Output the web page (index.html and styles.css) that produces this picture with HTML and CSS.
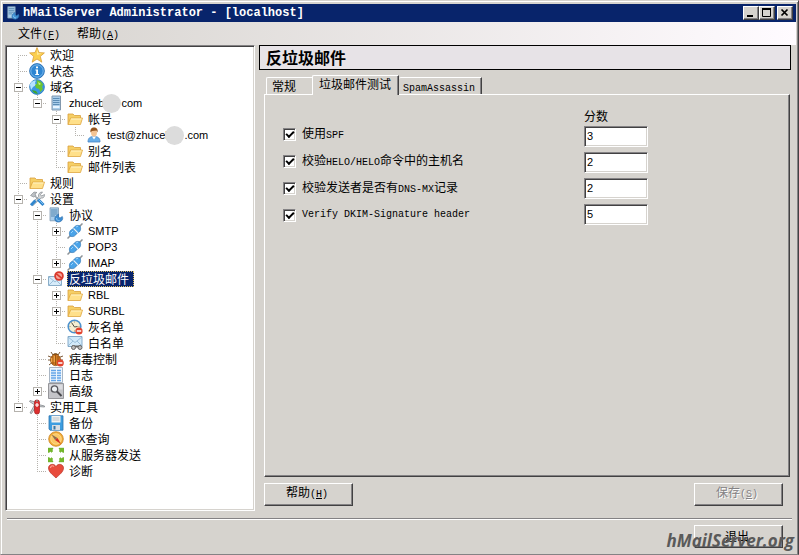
FILE: index.html
```html
<!DOCTYPE html>
<html lang="zh-CN">
<head>
    <meta charset="utf-8">
    <title>hMailServer Administrator</title>
    <link rel="stylesheet" href="styles.css">
</head>
<body>
<!-- icon set -->
<svg class="defs" aria-hidden="true">
    <symbol id="star" viewBox="0 0 16 16">
        <path d="M8 .6l2 5 5.4.3-4.1 3.5 1.5 5.8L8 12l-4.8 3.2 1.5-5.8L.6 5.9 6 5.6z" fill="#fbd050" stroke="#d9a03a" stroke-width=".8"/>
        <path d="M8 2.6l1.3 3.6 3.6.4L8 8z" fill="#ffe99b"/>
    </symbol>
    <symbol id="info" viewBox="0 0 16 16">
        <circle cx="8" cy="8" r="7.4" fill="#2f86d2" stroke="#2268ad" stroke-width=".8"/>
        <circle cx="8" cy="8" r="6.2" fill="none" stroke="#8cc4f2" stroke-width=".8"/>
        <path d="M7 3.4h2v1.8H7zM6.4 6.6H9V11h1v1H6.2v-1h1V7.6h-.8z" fill="#fff"/>
    </symbol>
    <symbol id="globe" viewBox="0 0 16 16">
        <circle cx="8" cy="8" r="7.4" fill="#3b97e3" stroke="#2c79bd" stroke-width=".8"/>
        <path d="M1 6c0-2 3-5 6-4.5L6 4l1 2-3 2-2 3z" fill="#b4e2ff"/>
        <path d="M7.5 1.2c3 0 5.500 1.500 6.600 4.300L13 8l1 2-2.500 3-1.500-3-3-1L6 6l2-1.500z" fill="#6cc432"/>
        <path d="M3 11l4 1 2 2.800c-3 .3-5-1.300-6-3.800z" fill="#3fa62f"/>
        <path d="M9 3l3 2-2 1z" fill="#d2f090"/>
    </symbol>
    <symbol id="server" viewBox="0 0 16 16">
        <path d="M4 1h8.500v14H4z" fill="#a8cdea" stroke="#8298ad"/>
        <path d="M5 3.500h6.500M5 5.500h6.500M5 7.500h6.500M5 9.500h6.500" stroke="#5c8db5"/>
        <path d="M5 12h6.500" stroke="#e8f5ff" stroke-width="2"/>
    </symbol>
    <symbol id="folder" viewBox="0 0 16 16">
        <path d="M1 13.500V3h5l1.500 1.500h6V8" fill="#f5cf66" stroke="#d9a03c" stroke-width=".8"/>
        <path d="M1 13.500L3.500 7h12L13.500 13.500z" fill="#ffe08a" stroke="#dea63f" stroke-width=".8"/>
        <path d="M4 8h10.500" stroke="#fff3c4"/>
    </symbol>
    <symbol id="user" viewBox="0 0 16 16">
        <path d="M2 15c0-4 2-5.500 6-5.500s6 1.500 6 5.500z" fill="#67aeea" stroke="#4684c4" stroke-width=".8"/>
        <path d="M6 9.500h4L8 12.500z" fill="#fff"/>
        <ellipse cx="8" cy="5.500" rx="3" ry="4" fill="#f4c494"/>
        <path d="M4.500 5.500C4 2 5.500.5 8 .5s4.300 1.500 3.500 5L10.500 3.500 6 4z" fill="#94541c"/>
    </symbol>
    <symbol id="tools" viewBox="0 0 16 16">
        <path d="M13.500 1l-2 2.500 1 1.500 3-1.500c.3 3-2 4-3.500 3.500L4 14.500 2 13l7.500-7.500C9 3 11 .8 13.500 1z" fill="#d3d6d8" stroke="#858b90" stroke-width=".7"/>
        <path d="M1.500 4.500L5 1l3 .5-2 1.300L7 5 4.500 6z" fill="#bcc0c4" stroke="#7d8388" stroke-width=".6"/>
        <path d="M6 5l4 4" stroke="#a4a9ad" stroke-width="1.600"/>
        <path d="M9 8.500l5.500 5.500M6.500 9.500L2 14.200" stroke="#3186cd" stroke-width="3"/>
        <path d="M9.500 8.500l4.500 4.500" stroke="#7ec0f3"/>
    </symbol>
    <symbol id="proto" viewBox="0 0 16 16">
        <path d="M2 .8h8.500v13H2z" fill="#a9cdea" stroke="#7d98b0" stroke-width=".8"/>
        <path d="M3 3h6.500M3 5h6.500M3 7h6.500M3 9h4" stroke="#5788af"/>
        <path d="M10.500 7l-3 2.500C5.500 13 8 15.500 11 15c3-.5 4.500-3 3.300-5.500L12 11l-1.500-1z" fill="#3e8ed3" stroke="#2c6ca8" stroke-width=".6"/>
        <path d="M8.500 11c0 2 1.500 3 3 2.500" fill="none" stroke="#92cbf5"/>
    </symbol>
    <symbol id="plug" viewBox="0 0 16 16">
        <path d="M15.500.5L12 4M4 12L.5 15.500" stroke="#8c9297" stroke-width="1.500"/>
        <path d="M3 13C1.500 9.500 3 7 6 6l4 4c-1.500 3-4 4.500-7 3zM13 3c1.500 3.500 0 6-2.500 7l-4.500-4C7.500 3 10 1.500 13 3z" fill="#4aa3e8" stroke="#2e76b5" stroke-width=".7"/>
        <path d="M6.500 5.500l4.500 4.500" stroke="#dff1ff" stroke-width="1.200"/>
        <path d="M4 10l2-2M9 4l2-.8" stroke="#9bd5ff"/>
    </symbol>
    <symbol id="spam" viewBox="0 0 16 16">
        <path d="M.5 5.500h13v9H.5z" fill="#d7ecfa" stroke="#7fa5c2" stroke-width=".9"/>
        <path d="M1 6l6 5 6-5M1 14l4.500-4.500M13 14L8.500 9.500" fill="none" stroke="#8fb5d2" stroke-width=".8"/>
        <circle cx="11" cy="5" r="3.900" fill="#f6a59a" stroke="#d93a2d" stroke-width="1.800"/>
        <path d="M8.300 2.800l5.400 4.400" stroke="#d93a2d" stroke-width="1.700"/>
    </symbol>
    <symbol id="clock" viewBox="0 0 16 16">
        <circle cx="7.500" cy="7.500" r="6.300" fill="#f5eed2" stroke="#4c91cd" stroke-width="1.600"/>
        <path d="M4.500 3.500L7.500 8l3-.5" fill="none" stroke="#4c4c44"/>
        <path d="M7.500 2.500v1M2.500 7.500h1M7.500 11.500v1M11.500 7.500h1" stroke="#908c78"/>
        <circle cx="12" cy="12" r="3.600" fill="#e2442f"/>
        <path d="M9.800 12h4.400" stroke="#fff" stroke-width="1.500"/>
    </symbol>
    <symbol id="white" viewBox="0 0 16 16">
        <path d="M1 1.500h14v10H1z" fill="#d2eafa" stroke="#7aa3c4" stroke-width=".9"/>
        <path d="M1 2l7 5.500L15 2M1 11l5-5M15 11l-5-5" fill="none" stroke="#8db4d2" stroke-width=".8"/>
        <path d="M5 11.500h9" stroke="#666" stroke-width="2"/>
        <circle cx="6.500" cy="12.500" r="2" fill="#bbb" stroke="#666"/>
        <circle cx="13" cy="12.500" r="2" fill="#bbb" stroke="#666"/>
    </symbol>
    <symbol id="bug" viewBox="0 0 16 16">
        <path d="M3 1l2 3M12 1l-2 3M0 5l4 1.500M0 9h4M1 14l3-2.500M15 5l-4 1.500M15 9h-4" stroke="#6e4824" stroke-width=".9"/>
        <path d="M4.500 4c1-2.500 5-2.500 6 0z" fill="#704818"/>
        <ellipse cx="7.500" cy="9" rx="5" ry="5.600" fill="#d27b20" stroke="#8d4d12" stroke-width=".8"/>
        <path d="M7.500 4v10M5 5v8M10 5v8" stroke="#8d4d12" stroke-width=".8"/>
        <path d="M3.700 7v4M6.200 5v6" stroke="#f7b458"/>
        <circle cx="12.300" cy="12" r="3.500" fill="#e2442f"/>
        <path d="M10.200 12h4.200" stroke="#fff" stroke-width="1.500"/>
    </symbol>
    <symbol id="log" viewBox="0 0 16 16">
        <path d="M1.500.5h13v15h-13z" fill="#eff6fd" stroke="#a9b6c4"/>
        <path d="M3 3.500h5M3 6h5M3 8.500h5M3 11h5M3 13.500h5M9 3.500h4M9 6h4M9 8.500h4M9 11h4M9 13.500h4" stroke="#64a5e8" stroke-width="1.300"/>
    </symbol>
    <symbol id="adv" viewBox="0 0 16 16">
        <path d="M.5.5h15v15H.5z" fill="#c4c4c8" stroke="#96969a"/>
        <path d="M1.500 1.500h13v5h-13z" fill="#dcdce0"/>
        <circle cx="6.500" cy="6" r="3.200" fill="#eef2f5" stroke="#57575c" stroke-width="1.300"/>
        <path d="M9 8.500l4.500 4.500" stroke="#48484c" stroke-width="2"/>
    </symbol>
    <symbol id="knife" viewBox="0 0 16 16">
        <path d="M6 3L1 1.500l-.5 1L5 5.500M9.500 5.500l6 1.500v1l-6-.5M5.500 6L1 14l1.500.5L6 9" fill="#d0d3d6" stroke="#85898d" stroke-width=".8"/>
        <rect x="5.500" y="1" width="5" height="14" rx="2.300" fill="#dc2f2f" stroke="#9e1818" stroke-width=".7"/>
        <path d="M8 4v4M6 6h4" stroke="#fff" stroke-width="1.200"/>
        <circle cx="8" cy="2" r="1" fill="#888"/>
    </symbol>
    <symbol id="disk" viewBox="0 0 16 16">
        <path d="M1 .8h14v14.400H2L1 14z" fill="#3d9de0" stroke="#2e74ad" stroke-width=".8"/>
        <path d="M3.500 1h9v6.500h-9z" fill="#f4f4f2"/>
        <path d="M4.500 3h7M4.500 5h7" stroke="#a9b5be" stroke-width=".8"/>
        <path d="M4 10h8v5H4z" fill="#d8dde2"/>
        <path d="M5.500 11h2v3.500h-2z" fill="#3777a5"/>
    </symbol>
    <symbol id="compass" viewBox="0 0 16 16">
        <circle cx="8" cy="8" r="7.300" fill="#f3ad35" stroke="#c98424" stroke-width=".8"/>
        <circle cx="8" cy="8" r="5.300" fill="#fbc966" stroke="#ffe2a0" stroke-width=".7"/>
        <path d="M3.500 3.500L9.500 7 7 9z" fill="#8c7050"/>
        <path d="M13 13L7 9l2.500-2z" fill="#d32c22"/>
    </symbol>
    <symbol id="arrows" viewBox="0 0 16 16">
        <path d="M0 1h5v1L4 3l1 1-1.500 1.500L2.500 4.500 1 5.500H0zM16 1h-5v1l1 1-1 1 1.500 1.500 1-1L15 5.500h1zM0 15h5v-1l-1-1 1-1-1.500-1.500-1 1L1 10.500H0zM16 15h-5v-1l1-1-1-1 1.500-1.500 1 1 1.500-1h1z" fill="#74b82b" stroke="#6aa832" stroke-width=".4"/>
    </symbol>
    <symbol id="heart" viewBox="0 0 16 16">
        <path d="M8 15C5 12 .5 9 .5 5 .5 1 6 0 8 3.500 10 0 15.500 1 15.500 5c0 4-4.500 7-7.500 10z" fill="#e84b3c" stroke="#b93328" stroke-width=".7"/>
        <path d="M2.500 5c0-2 2-3 3.500-1.500" fill="none" stroke="#ff9e90" stroke-width="1.200"/>
    </symbol>
</svg>

<div class="window">
    <header class="titlebar">
        <svg class="icon"><use href="#proto"/></svg>
        <h1 class="title">hMailServer Administrator - [localhost]</h1>
        <div class="controls">
            <button class="control" aria-label="最小化"><svg viewBox="0 0 12 10"><path d="M2 8h6" stroke="#000" stroke-width="2"/></svg></button>
            <button class="control" aria-label="最大化"><svg viewBox="0 0 12 10"><path d="M1.500 1v7.500h8V1M1 1h9" fill="none" stroke="#000"/><path d="M1 1h9" stroke="#000" stroke-width="2"/></svg></button>
            <button class="control close" aria-label="关闭"><svg viewBox="0 0 12 10"><path d="M2.500 1.500l6 6M8.500 1.500l-6 6" stroke="#000" stroke-width="1.700"/></svg></button>
        </div>
    </header>

    <nav class="menu">
        <button class="menu-item">文件<span class="en">(<u>F</u>)</span></button>
        <button class="menu-item">帮助<span class="en">(<u>A</u>)</span></button>
    </nav>

    <div class="content">
        <ul class="tree">
            <li><div class="row"><span class="node"></span><svg class="icon"><use href="#star"/></svg><span class="label">欢迎</span></div></li>
            <li><div class="row"><span class="node"></span><svg class="icon"><use href="#info"/></svg><span class="label">状态</span></div></li>
            <li>
                <div class="row"><span class="node minus"></span><svg class="icon"><use href="#globe"/></svg><span class="label">域名</span></div>
                <ul>
                    <li>
                        <div class="row"><span class="node minus"></span><svg class="icon"><use href="#server"/></svg><span class="label latin">zhuceb<i class="blob"></i>com</span></div>
                        <ul>
                            <li>
                                <div class="row"><span class="node minus"></span><svg class="icon"><use href="#folder"/></svg><span class="label">帐号</span></div>
                                <ul>
                                    <li><div class="row"><span class="node"></span><svg class="icon"><use href="#user"/></svg><span class="label latin">test@zhuceb<i class="blob wide"></i>.com</span></div></li>
                                </ul>
                            </li>
                            <li><div class="row"><span class="node"></span><svg class="icon"><use href="#folder"/></svg><span class="label">别名</span></div></li>
                            <li><div class="row"><span class="node"></span><svg class="icon"><use href="#folder"/></svg><span class="label">邮件列表</span></div></li>
                        </ul>
                    </li>
                </ul>
            </li>
            <li><div class="row"><span class="node"></span><svg class="icon"><use href="#folder"/></svg><span class="label">规则</span></div></li>
            <li>
                <div class="row"><span class="node minus"></span><svg class="icon"><use href="#tools"/></svg><span class="label">设置</span></div>
                <ul>
                    <li>
                        <div class="row"><span class="node minus"></span><svg class="icon"><use href="#proto"/></svg><span class="label">协议</span></div>
                        <ul>
                            <li><div class="row"><span class="node plus"></span><svg class="icon"><use href="#plug"/></svg><span class="label latin">SMTP</span></div></li>
                            <li><div class="row"><span class="node"></span><svg class="icon"><use href="#plug"/></svg><span class="label latin">POP3</span></div></li>
                            <li><div class="row"><span class="node plus"></span><svg class="icon"><use href="#plug"/></svg><span class="label latin">IMAP</span></div></li>
                        </ul>
                    </li>
                    <li>
                        <div class="row"><span class="node minus"></span><svg class="icon"><use href="#spam"/></svg><span class="label selected">反垃圾邮件</span></div>
                        <ul>
                            <li><div class="row"><span class="node plus"></span><svg class="icon"><use href="#folder"/></svg><span class="label latin">RBL</span></div></li>
                            <li><div class="row"><span class="node plus"></span><svg class="icon"><use href="#folder"/></svg><span class="label latin">SURBL</span></div></li>
                            <li><div class="row"><span class="node"></span><svg class="icon"><use href="#clock"/></svg><span class="label">灰名单</span></div></li>
                            <li><div class="row"><span class="node"></span><svg class="icon"><use href="#white"/></svg><span class="label">白名单</span></div></li>
                        </ul>
                    </li>
                    <li><div class="row"><span class="node"></span><svg class="icon"><use href="#bug"/></svg><span class="label">病毒控制</span></div></li>
                    <li><div class="row"><span class="node"></span><svg class="icon"><use href="#log"/></svg><span class="label">日志</span></div></li>
                    <li><div class="row"><span class="node plus"></span><svg class="icon"><use href="#adv"/></svg><span class="label">高级</span></div></li>
                </ul>
            </li>
            <li>
                <div class="row"><span class="node minus"></span><svg class="icon"><use href="#knife"/></svg><span class="label">实用工具</span></div>
                <ul>
                    <li><div class="row"><span class="node"></span><svg class="icon"><use href="#disk"/></svg><span class="label">备份</span></div></li>
                    <li><div class="row"><span class="node"></span><svg class="icon"><use href="#compass"/></svg><span class="label"><span class="latin">MX</span>查询</span></div></li>
                    <li><div class="row"><span class="node"></span><svg class="icon"><use href="#arrows"/></svg><span class="label">从服务器发送</span></div></li>
                    <li><div class="row"><span class="node"></span><svg class="icon"><use href="#heart"/></svg><span class="label">诊断</span></div></li>
                </ul>
            </li>
        </ul>

        <main class="main">
            <h2 class="heading">反垃圾邮件</h2>
            <div class="settings">
                <div class="tabs" role="tablist">
                    <button class="tab" role="tab">常规</button>
                    <button class="tab active" role="tab" aria-selected="true">垃圾邮件测试</button>
                    <button class="tab last" role="tab"><span class="en">SpamAssassin</span></button>
                </div>
                <div class="panel" role="tabpanel">
                    <div class="checks">
                        <label class="check"><input type="checkbox" checked><span>使用<span class="en">SPF</span></span></label>
                        <label class="check"><input type="checkbox" checked><span>校验<span class="en">HELO/HELO</span>命令中的主机名</span></label>
                        <label class="check"><input type="checkbox" checked><span>校验发送者是否有<span class="en">DNS-MX</span>记录</span></label>
                        <label class="check"><input type="checkbox" checked><span class="en">Verify DKIM-Signature header</span></label>
                    </div>
                    <div class="scores">
                        <label class="score-label" for="spf">分数</label>
                        <input class="score" id="spf" type="text" value="3">
                        <input class="score" type="text" value="2" aria-label="HELO">
                        <input class="score" type="text" value="2" aria-label="DNS-MX">
                        <input class="score" type="text" value="5" aria-label="DKIM">
                    </div>
                </div>
                <div class="actions">
                    <button class="button">帮助<span class="en">(<u>H</u>)</span></button>
                    <button class="button" disabled>保存<span class="en">(<u>S</u>)</span></button>
                </div>
            </div>
        </main>
    </div>

    <footer class="footer">
        <button class="button">退出</button>
        <span class="watermark">hMailServer.org</span>
    </footer>
</div>
</body>
</html>
```

FILE: styles.css
```css
*, *::before {
    box-sizing: border-box;
}
body {
    margin: 0;
    background: #d6d3ce;
    color: #000;
    font: 12px/16px "Noto Sans CJK SC", sans-serif;
}
button, input {
    font: inherit;
    color: inherit;
}
.defs {
    display: none;
}
.en {
    font: 10px/16px "Liberation Mono", monospace;
}
.latin {
    font: 11px/16px "Liberation Sans", sans-serif;
}

/* window frame */
.window {
    display: flex;
    flex-direction: column;
    min-height: 100vh;
    padding: 3px 2px 0 1px;
    border: 1px solid;
    border-color: #d6d3ce #424142 #848284 #d6d3ce;
    box-shadow: inset 1px 1px #fff, inset -1px 0 #848284;
}
.titlebar {
    display: flex;
    align-items: center;
    height: 18px;
    margin: 0 0 0 1px;
    padding: 0 3px;
    background: #08246b;
}
.titlebar .icon {
    width: 14px;
    height: 14px;
    margin: 0;
}
.title {
    flex: 1;
    margin: 0 0 0 3px;
    color: #fff;
    font: bold 12px/18px "Liberation Mono", monospace;
}
.controls {
    display: flex;
}
.control {
    width: 16px;
    height: 14px;
    padding: 0;
    background: #d6d3ce;
    border: 1px solid;
    border-color: #fff #424142 #424142 #fff;
    box-shadow: inset -1px -1px #848284;
}
.control svg {
    display: block;
    width: 12px;
    height: 10px;
    margin-left: 1px;
}
.close {
    margin-left: 2px;
}
.menu {
    display: flex;
    gap: 17px;
    height: 23px;
    margin-left: 1px;
    padding: 2px 15px 0;
    background: linear-gradient(to right, #d6d3ce, #fffbff);
}
.menu-item {
    padding: 0;
    background: none;
    border: 0;
}

.content {
    flex: 1;
    display: flex;
    gap: 4px;
    padding: 0 5px 7px 3px;
}

/* tree */
.tree {
    flex: 0 0 250px;
    padding: 1px 3px;
    background: #fff;
    border: 1px solid;
    border-color: #848284 #fff #fff #848284;
    box-shadow: inset 1px 1px #424142, inset -1px -1px #d6d3ce;
}
.tree, .tree ul {
    margin: 0;
    list-style: none;
}
.tree ul {
    padding: 0;
}
.tree li {
    padding-left: 19px;
    background: repeating-linear-gradient(#b5b2ad 0 1px, transparent 1px 2px) 9px 0 / 1px 100% no-repeat;
}
.tree > li:first-child {
    background-position: 9px 8px;
}
.tree li:last-child {
    background-size: 1px 8px;
}
.row {
    display: flex;
    align-items: center;
    height: 16px;
    margin-left: -19px;
}
.node {
    display: flex;
    align-items: center;
    justify-content: center;
    width: 19px;
    height: 16px;
    background: repeating-linear-gradient(to right, #b5b2ad 0 1px, transparent 1px 2px) 9px 8px / 10px 1px no-repeat;
}
.minus::before, .plus::before {
    content: "";
    width: 9px;
    height: 9px;
    margin-top: 1px;
    border: 1px solid #b5b2ad;
    background: linear-gradient(#000, #000) center / 5px 1px no-repeat #fff;
}
.plus::before {
    background: linear-gradient(#000, #000) center / 5px 1px no-repeat, linear-gradient(#000, #000) center / 1px 5px no-repeat #fff;
}
.icon {
    flex: none;
    width: 16px;
    height: 16px;
    margin: 0 3px 0 1px;
}
.label {
    display: flex;
    align-items: center;
    height: 16px;
    padding: 0 2px;
    white-space: nowrap;
}
.selected {
    padding-right: 5px;
    background: #08246b;
    color: #fff;
    outline: 1px dotted #e0c060;
    outline-offset: -1px;
}
.blob {
    width: 19px;
    height: 19px;
    margin: 0 0 0 -2px;
    border-radius: 50%;
    background: #dcdcdc;
}
.blob.wide {
    margin-left: -6px;
}

/* right side */
.main {
    flex: 1;
    display: flex;
    flex-direction: column;
}
.heading {
    height: 25px;
    margin: 0;
    padding: 0 6px;
    background: #e7e3e7;
    border: 1px solid #000;
    font-size: 16px;
    line-height: 22px;
}
.settings {
    flex: 1;
    display: flex;
    flex-direction: column;
    padding: 5px 1px 0 5px;
}
.tabs {
    display: flex;
    align-items: flex-end;
    padding-left: 2px;
}
.tab {
    height: 17px;
    padding: 0 16px 0 5px;
    background: #d6d3ce;
    border: 0 solid #fff;
    border-width: 1px 0 0 1px;
    border-radius: 2px 0 0 0;
    text-align: left;
}
.tab.active {
    position: relative;
    height: 20px;
    margin-bottom: -1px;
    padding: 0 7px 3px 6px;
    border-right: 1px solid #424142;
    box-shadow: inset -1px 0 #848284;
}
.tab.last {
    padding: 0 6px 0 4px;
    border-left: 0;
    border-right: 1px solid #424142;
    box-shadow: inset -1px 0 #848284;
}
.panel {
    flex: 1;
    display: flex;
    align-items: flex-start;
    padding: 14px 18px;
    border: 1px solid;
    border-color: #fff #424142 #424142 #fff;
    box-shadow: inset -1px -1px #848284;
}
.checks {
    display: grid;
    gap: 11px;
    width: 301px;
    padding-top: 17px;
}
.check {
    display: flex;
    align-items: center;
    gap: 6px;
    height: 16px;
}
.check input {
    appearance: none;
    width: 13px;
    height: 13px;
    margin: 0;
    background: #fff;
    border: 1px solid;
    border-color: #848284 #fff #fff #848284;
    box-shadow: inset 1px 1px #424142, inset -1px -1px #d6d3ce;
}
.check input:checked::before {
    content: "";
    display: block;
    width: 8px;
    height: 5px;
    margin: 2px;
    border: solid #000;
    border-width: 0 0 2px 2px;
    transform: rotate(-45deg);
}
.scores {
    display: grid;
    gap: 5px;
}
.score-label {
    height: 12px;
    line-height: 14px;
}
.score {
    width: 64px;
    height: 21px;
    padding: 0 2px 2px;
    background: #fff;
    border: 1px solid;
    border-color: #848284 #fff #fff #848284;
    box-shadow: inset 1px 1px #424142, inset -1px -1px #d6d3ce;
    font: 11px/16px "Liberation Sans", sans-serif;
}
.actions {
    display: flex;
    justify-content: space-between;
    padding: 6px 7px 5px 0;
}
.button {
    width: 89px;
    height: 23px;
    padding: 0 3px 2px 0;
    background: #d6d3ce;
    border: 1px solid;
    border-color: #fff #424142 #424142 #fff;
    box-shadow: inset -1px -1px #848284;
}
.button:disabled {
    color: #848284;
    text-shadow: 1px 1px #fff;
}

.footer {
    position: relative;
    display: flex;
    justify-content: flex-end;
    margin: 0 4px 0 5px;
    padding: 6px 9px 6px 0;
    border-top: 1px solid #848284;
    box-shadow: inset 0 1px #fff;
}
.watermark {
    position: absolute;
    right: -2px;
    bottom: 3px;
    color: #5a5a5a;
    font: italic bold 17px/20px "Open Sans", sans-serif;
}
```
